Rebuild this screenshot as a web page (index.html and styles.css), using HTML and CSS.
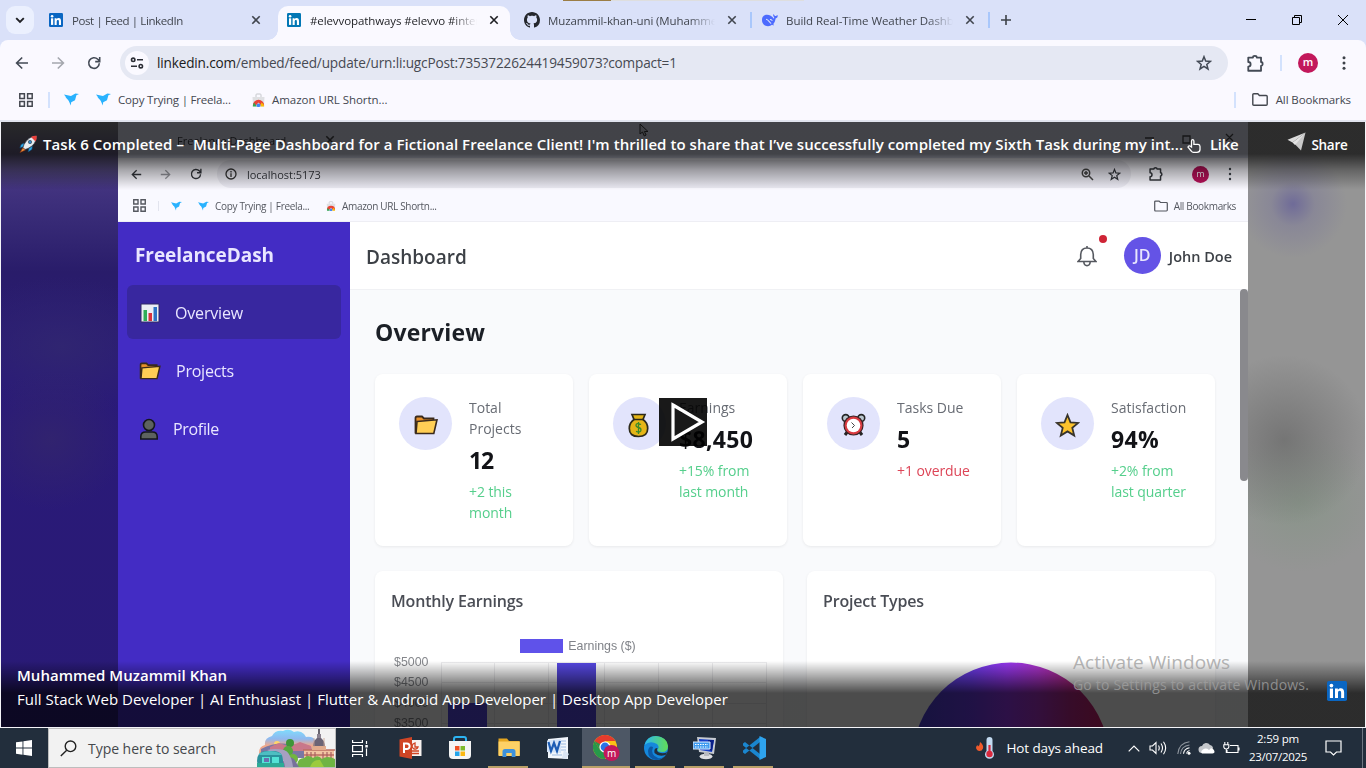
FILE: index.html
```html
<!DOCTYPE html>
<html lang="en">
<head>
<meta charset="utf-8">
<title>#elevvopathways #elevvo</title>
<link rel="stylesheet" href="styles.css">
</head>
<body>
<svg class="defs" width="0" height="0">
  <defs>
    <symbol id="li" viewBox="0 0 14 14"><rect width="14" height="14" rx="1.2" fill="currentColor"/><g fill="#fff"><circle cx="3.1" cy="3.2" r="1.3"/><rect x="2" y="5.3" width="2.2" height="6.6"/><path d="M5.6 5.3h2v.9c.4-.7 1.1-1.1 2-1.1 1.8 0 2.4 1.2 2.4 2.9v3.9H9.9V8.5c0-.9-.2-1.6-1-1.6s-1.2.6-1.2 1.6v3.4H5.6z"/></g></symbol>
    <symbol id="x" viewBox="0 0 10 10"><path d="M1.3 1.3l7.4 7.4M8.7 1.3L1.3 8.7" stroke="currentColor" stroke-width="1.6" fill="none"/></symbol>
    <symbol id="back" viewBox="0 0 14 14"><path d="M13 7H2M7.2 1.5L1.6 7l5.6 5.5" stroke="currentColor" stroke-width="1.6" fill="none"/></symbol>
    <symbol id="reload" viewBox="0 0 14 14"><path d="M12.3 7.2A5.3 5.3 0 1 1 10.8 3.3L12.6 5M12.7 1v4.6H8.2" stroke="currentColor" stroke-width="1.6" fill="none"/></symbol>
    <symbol id="grid" viewBox="0 0 14 14"><path d="M.8.8h4.6v4.6H.8zM8.6.8h4.6v4.6H8.6zM.8 8.6h4.6v4.6H.8zM8.6 8.6h4.6v4.6H8.6z" stroke="currentColor" stroke-width="1.5" fill="none"/></symbol>
    <symbol id="bird" viewBox="0 0 15 13"><path d="M0 1.4l7 1.6L11.4.6 15 .9 12.4 2.3 11 7.2 7.2 9.2 6.8 12.6 4.8 8z" fill="#29b2fe"/><path d="M1.5 4l5 .8-3 1.4z" fill="#29b2fe"/></symbol>
    <symbol id="store" viewBox="0 0 13 14"><path d="M4 4V1.8Q4 1 4.800 1h3.400Q9 1 9 1.800V4" stroke="#c6c8cc" fill="none"/><path d="M.5 4h12l-.6 9.400H1.100z" fill="#dfe0e3"/><path d="M.800 12.500a5.700 5.700 0 0 1 11.400 0H9.200L6.500 9.500 3.800 12.500z" fill="#ea4335"/><path d="M.800 13.500a5.500 5.500 0 0 1 1.300-3.800l2.800 3.800z" fill="#34a853"/><path d="M8.200 13.500l1.300-4.100q2.700 1.500 2.700 4.100z" fill="#fbbc04"/><circle cx="6.500" cy="12.300" r="1.900" fill="#4285f4"/></symbol>
    <symbol id="star" viewBox="0 0 16 16"><path d="M8 1.700l1.700 4.400 4.700.3-3.600 3 1.200 4.600L8 11.400 4 14l1.200-4.600-3.600-3 4.700-.3z" stroke="currentColor" stroke-width="1.500" fill="none"/></symbol>
    <symbol id="puzzle" viewBox="0 0 16 16"><path d="M1.200 2.400H5.600a1.800 1.500 0 0 1 3.600 0H13.200V6.600a1.500 1.800 0 0 1 0 3.600V14.800H1.200V11a2 2 0 0 0 0-4.400z" stroke="currentColor" stroke-width="1.700" fill="none" stroke-linejoin="round"/></symbol>
    <symbol id="folderline" viewBox="0 0 16 13"><path d="M.8 1.800Q.8.800 1.800.8h4l1.600 1.700h6.800q1 0 1 1v7.700q0 1-1 1H1.800q-1 0-1-1z" stroke="currentColor" stroke-width="1.400" fill="none"/></symbol>
    <symbol id="folder" viewBox="0 0 24 20"><path d="M1.500 18.500V3Q1.500 1.500 3 1.500h5l2 2h9.500V6" fill="#e8902a" stroke="#3a2a1c" stroke-width="1.800"/><path d="M3 6.500L23 4.800 19.800 18.500H2z" fill="#ffce55" stroke="#3a2a1c" stroke-width="1.600"/></symbol>
  </defs>
</svg>

<div class="screen">
  <div class="tabstrip">
    <i class="edge edge-a"></i><i class="edge edge-b"></i>
    <div class="tabsearch"><svg width="10" height="7" viewBox="0 0 10 7"><path d="M1.200 1.200L5 5l3.800-3.800" stroke="#1f2024" stroke-width="1.900" fill="none"/></svg></div>
    <div class="tab"><svg class="fav lia"><use href="#li"/></svg><span class="title t1">Post | Feed | LinkedIn</span><svg class="x"><use href="#x"/></svg></div>
    <div class="tab active"><svg class="fav lib"><use href="#li"/></svg><span class="title t2">#elevvopathways #elevvo #internship</span><svg class="x"><use href="#x"/></svg></div>
    <div class="tab"><svg class="fav gh" viewBox="0 0 16 16"><path fill="#24272d" d="M8 0C3.580 0 0 3.580 0 8c0 3.540 2.290 6.530 5.470 7.590.4.070.550-.170.550-.380 0-.190-.010-.820-.010-1.490-2.010.370-2.530-.490-2.690-.940-.090-.230-.480-.940-.820-1.130-.280-.150-.680-.520-.010-.530.630-.010 1.080.580 1.230.820.720 1.210 1.870.870 2.330.660.070-.520.280-.870.510-1.070-1.780-.200-3.640-.890-3.640-3.950 0-.870.310-1.590.820-2.150-.080-.200-.360-1.020.080-2.120 0 0 .670-.210 2.200.820.640-.180 1.320-.270 2-.270s1.360.090 2 .270c1.530-1.040 2.200-.820 2.200-.820.440 1.100.160 1.920.080 2.120.510.560.820 1.270.820 2.150 0 3.070-1.870 3.750-3.650 3.950.290.250.540.730.540 1.480 0 1.070-.010 1.930-.010 2.200 0 .210.150.460.550.380A8.010 8.010 0 0 0 16 8c0-4.420-3.580-8-8-8z"/></svg><span class="title t3">Muzammil-khan-uni (Muhammed</span><svg class="x"><use href="#x"/></svg></div>
    <div class="tab sep"><svg class="fav gh" viewBox="0 0 16 16"><path fill="#4d6bfe" d="M15.700 3.200c-.8-.2-1 .5-1.800.7-1 .2-1.700-.7-2.200-2-.8.900-.6 2 .1 2.900.6.700.4 1.200.100 1.900C10 4 7.600 2.800 5 2.700 2 2.600 0 4.800 0 8c0 3.700 2.600 6.200 6 6.200 1.800 0 3-.5 4-1.400l1.600.6c.4-.300 0-.9-.3-1.500 1.400-1.500 2-3.300 2.300-5.500C15 6 15.900 5 15.700 3.200z"/><path d="M4 7.200c2.500.2 3.500 3.600 5.200 4.300M8 7.600q1.600-.4 2.300 1.300" stroke="#dae1f9" stroke-width="1.100" fill="none"/></svg><span class="title t4">Build Real-Time Weather Dashboard</span><svg class="x"><use href="#x"/></svg></div>
    <svg class="plus" width="12" height="12" viewBox="0 0 12 12"><path d="M6 1v10M1 6h10" stroke="#3c4148" stroke-width="1.600"/></svg>
    <div class="wincontrols">
      <svg width="12" height="12" viewBox="0 0 12 12"><path d="M1 5.500h10" stroke="#000"/></svg>
      <svg width="12" height="12" viewBox="0 0 12 12" fill="none" stroke="#000"><path d="M1.500 3.500h7v7h-7zM3.500 3V1.500h7v7H9"/></svg>
      <svg width="12" height="12" viewBox="0 0 12 12"><path d="M1 1l10 10M11 1L1 11" stroke="#000"/></svg>
    </div>
  </div>

  <div class="toolbar">
    <div class="nav"><svg><use href="#back"/></svg><svg class="fwd"><use href="#back"/></svg><svg><use href="#reload"/></svg></div>
    <div class="omnibox">
      <div class="tune"><svg width="14" height="12" viewBox="0 0 14 12" fill="none" stroke="#2c2f36" stroke-width="1.600"><circle cx="3.200" cy="2.800" r="1.700"/><path d="M7 2.800h6M1 9.200h6"/><circle cx="10.800" cy="9.200" r="1.700"/></svg></div>
      <span class="url"><b>linkedin.com</b>/embed/feed/update/urn:li:ugcPost:7353722624419459073?compact=1</span>
      <svg class="star"><use href="#star"/></svg>
    </div>
    <svg class="puz"><use href="#puzzle"/></svg>
    <i class="vsep"></i>
    <div class="profile">m</div>
    <svg class="kebab" width="4" height="14" viewBox="0 0 4 14" fill="#3c4148"><circle cx="2" cy="1.700" r="1.500"/><circle cx="2" cy="7" r="1.500"/><circle cx="2" cy="12.300" r="1.500"/></svg>
  </div>

  <div class="bookmarks">
    <svg class="grid"><use href="#grid"/></svg><i class="vsep"></i>
    <svg class="bird"><use href="#bird"/></svg>
    <svg class="bird second"><use href="#bird"/></svg><span class="bm bm1">Copy Trying | Freela...</span>
    <svg class="store"><use href="#store"/></svg><span class="bm bm2">Amazon URL Shortn...</span>
    <div class="allbm"><i class="vsep"></i><svg class="fold"><use href="#folderline"/></svg><span class="bm bm3">All Bookmarks</span></div>
  </div>

  <div class="stage">
    <div class="side left"></div>
    <div class="frame">
      <div class="f-tabs"><i></i><b>Freelance Dashboard</b><svg class="x"><use href="#x"/></svg>
        <svg class="cursor" width="10" height="14" viewBox="0 0 10 14"><path d="M1 1v10l2.500-2 1.800 4 1.800-1-1.700-3.500H9z" fill="#cfd2de" stroke="#333"/></svg>
        <svg class="f-win" width="92" height="12" viewBox="0 0 92 12" fill="none" stroke="#222" stroke-width="1.300"><path d="M2 6h9M40 4h7v7h-7zM83 2l7 7M90 2l-7 7"/></svg></div>
      <div class="f-bar">
        <svg class="f-back"><use href="#back"/></svg><svg class="f-fwd"><use href="#back"/></svg><svg class="f-rel"><use href="#reload"/></svg>
        <div class="f-omni"><svg width="12" height="12" viewBox="0 0 12 12" fill="none" stroke="#333" stroke-width="1.300"><circle cx="6" cy="6" r="5"/><path d="M6 5.300V9M6 3v1.400"/></svg><span>localhost:5173</span>
          <svg class="f-zoom" width="13" height="13" viewBox="0 0 13 13" fill="none" stroke="#444" stroke-width="1.500"><circle cx="5" cy="5" r="3.700"/><path d="M8 8l4 4M3 5h4M5 3v4"/></svg><svg class="f-star"><use href="#star"/></svg></div>
        <svg class="f-puz"><use href="#puzzle"/></svg><div class="f-prof">m</div><svg class="f-keb" width="4" height="14" viewBox="0 0 4 14" fill="#3c4148"><circle cx="2" cy="2" r="1.200"/><circle cx="2" cy="7" r="1.200"/><circle cx="2" cy="12" r="1.200"/></svg>
      </div>
      <div class="f-marks">
        <svg class="fgrid"><use href="#grid"/></svg><i></i><svg class="fbird"><use href="#bird"/></svg><svg class="fbird b2"><use href="#bird"/></svg><span class="fm1">Copy Trying | Freela...</span><svg class="fstore"><use href="#store"/></svg><span class="fm2">Amazon URL Shortn...</span>
        <div class="f-all"><svg><use href="#folderline"/></svg><span>All Bookmarks</span></div>
      </div>
      <div class="app">
        <div class="sidebar">
          <div class="brand">FreelanceDash</div>
          <div class="item on"><svg width="22" height="22" viewBox="0 0 22 22"><path d="M2 2h18v18H2z" fill="#eceff4" stroke="#312a66"/><path d="M4.500 8h3.500v11H4.500z" fill="#2fae58"/><path d="M9.500 11h3.500v8H9.500z" fill="#d8323c"/><path d="M14.500 5h3.500v14h-3.500z" fill="#2d74c4"/></svg><span class="n1">Overview</span></div>
          <div class="item"><svg width="22" height="18"><use href="#folder"/></svg><span class="n2">Projects</span></div>
          <div class="item"><svg width="20" height="22" viewBox="0 0 20 22" fill="#5d625f" stroke="#15171c" stroke-width="1.600"><circle cx="10" cy="7" r="5.500"/><path d="M1.800 21v-2.500Q2 14 6.500 14h7q4.500 0 4.700 4.500V21z"/></svg><span class="n3">Profile</span></div>
        </div>
        <div class="main">
          <div class="header"><span class="h-title">Dashboard</span>
            <div class="bell"><svg width="20" height="22" viewBox="0 0 20 22" fill="none" stroke="#55585f" stroke-width="1.600"><path d="M10 1v2M1 16.500h18L16.300 13.500V9.500Q16 3 10 3T3.700 9.500v4zM6.800 17q.4 3.600 3.200 3.600T13.200 17"/></svg><i></i></div>
            <div class="jd">JD</div><span class="john">John Doe</span></div>
          <div class="content">
            <h2>Overview</h2>
            <div class="cards">
              <div class="card"><div class="ic"><svg width="24" height="20"><use href="#folder"/></svg></div><div class="tx"><span>Total<br>Projects</span><strong class="twelve">12</strong><em>+2 this<br>month</em></div></div>
              <div class="card earn"><div class="ic"><svg width="21" height="25" viewBox="0 0 21 25"><path d="M4 1.500h13l-2 5q4.700 3.300 4.700 9 0 8-9.200 8t-9.200-8q0-5.700 4.700-9z" fill="#e5b517" stroke="#2d2a1c" stroke-width="1.700"/><path d="M5 6.500h11" stroke="#2d2a1c" stroke-width="1.500"/><path d="M13 11.500q-5-2-5 .8 0 1.700 2.500 2.200T13 17q0 3-5 1.300M10.500 9v12" stroke="#3b8b2a" stroke-width="1.300" fill="none"/></svg></div><div class="tx"><span>Earnings</span><strong>$8,450</strong><em>+15% from<br>last month</em></div></div>
              <div class="card"><div class="ic"><svg width="25" height="24" viewBox="0 0 25 24"><path d="M4 22l3-4M21 22l-3-4" stroke="#252525" stroke-width="3"/><circle cx="4.700" cy="5" r="3.400" fill="#b9c6ce" stroke="#252525" stroke-width="1.600"/><circle cx="20.300" cy="5" r="3.400" fill="#b9c6ce" stroke="#252525" stroke-width="1.600"/><circle cx="12.500" cy="12.500" r="9.500" fill="#d93b41" stroke="#3c2326" stroke-width="1.200"/><circle cx="12.500" cy="12.500" r="6.800" fill="#fff"/><path d="M10.500 9.500l3 3-2.500 2.500" stroke="#444" fill="none"/></svg></div><div class="tx"><span>Tasks Due</span><strong>5</strong><em class="red">+1 overdue</em></div></div>
              <div class="card"><div class="ic"><svg width="25" height="25" viewBox="0 0 25 25"><path d="M12.500 2l3 7.300 7.700.6-5.900 5 1.900 7.600-6.700-4.100-6.700 4.100 1.900-7.600-5.900-5 7.700-.6z" fill="#fcc22c" stroke="#37332b" stroke-width="1.800"/></svg></div><div class="tx"><span>Satisfaction</span><strong>94%</strong><em>+2% from<br>last quarter</em></div></div>
            </div>
            <div class="charts">
              <div class="panel"><h3>Monthly Earnings</h3>
                <div class="legend"><i></i>Earnings ($)</div>
                <div class="plot"><div class="yaxis"><span>$5000</span><span>$4500</span><span>$4000</span><span>$3500</span></div>
                  <svg width="326" height="70" viewBox="0 0 326 70"><path d="M.5 0v70M53.500 0v70M107.500 0v70M163.500 0v70M217.500 0v70M271.500 0v70M325.500 0v70M0 .5h330M0 20.500h330M0 41.500h330M0 61.500h330" stroke="#ececee" fill="none"/><path d="M7 41h39v30H7zM116 1h39v70h-39z" fill="#5547e0"/></svg></div>
              </div>
              <div class="panel"><h3 class="pt">Project Types</h3>
                <svg class="pie" width="200" height="80" viewBox="0 0 200 80"><defs><linearGradient id="pg"><stop offset="0" stop-color="#4640d0"/><stop offset=".3" stop-color="#6a3ae6"/><stop offset=".48" stop-color="#9436ea"/><stop offset=".64" stop-color="#a932c6"/><stop offset=".8" stop-color="#b5288a"/><stop offset="1" stop-color="#cc1f63"/></linearGradient></defs><circle cx="100" cy="99" r="98.500" fill="url(#pg)"/></svg>
              </div>
            </div>
            <div class="scroll"></div>
          </div>
        </div>
      </div>
    </div>
    <div class="side right"></div>
    <div class="shade top"></div>
    <div class="shade bottom"></div>
    <div class="caption">
      <svg class="rocket" width="19" height="18" viewBox="0 0 19 18"><path d="M5 8L2 9.500.8 13 5 11.500zM10 13l-1 4 4-2.500.500-4z" fill="#2aa8e8" stroke="#143a60" stroke-width=".6"/><path d="M4 12.500L1 17.500 6.500 15z" fill="#f7923a" stroke="#7a2b10" stroke-width=".6"/><path d="M17.500 1Q9.500 1 5 9.500l-1 3L6 14.500l3-1Q17.500 9.500 17.500 1z" fill="#e8edf2" stroke="#333a44" stroke-width=".7"/><path d="M17.700.8q-3.500-.200-5.700 1.200l4.500 4.600Q18 4 17.700.8z" fill="#e8413c"/><circle cx="11" cy="7" r="1.700" fill="#2f87c8" stroke="#333a44" stroke-width=".6"/></svg>
      <span class="c1">Task 6 Completed –</span><span class="c2">Multi-Page Dashboard for a Fictional Freelance Client! I'm thrilled to share that I’ve successfully completed my Sixth Task during my int...</span>
      <svg class="thumb" width="14" height="14" viewBox="0 0 14 14" fill="none" stroke="#fff" stroke-width="1.300"><path d="M4.500 7V2Q4.600.7 5.700.7T6.900 2v3.400h4.200q1.900.2 1.900 2v3.200q-.2 2.700-3 2.700H6.500Q5 13.300 4.200 12L1 8.200Q1.500 6.500 3 7l1.500 1z"/></svg>
      <span class="c3">Like</span>
      <svg class="plane" width="19" height="19" viewBox="0 0 19 19"><path d="M18.500.5L.5 7.800l5 2.800z" fill="#dcdcdc"/><path d="M18.500.5L7 11.200 14 18.500z" fill="#c9c9c9"/><path d="M18.500.5L5.500 10.600 8 13z" fill="#e4e4e4"/></svg>
      <span class="c4">Share</span>
    </div>
    <div class="play"><svg width="48" height="48" viewBox="0 0 48 48"><path d="M14 7L43 24 14 41z" fill="none" stroke="#fff" stroke-width="3.200"/></svg></div>
    <div class="author"><b>Muhammed Muzammil Khan</b><span class="role">Full Stack Web Developer | AI Enthusiast | Flutter &amp; Android App Developer | Desktop App Developer</span></div>
    <svg class="lilogo"><use href="#li"/></svg>
    <div class="watermark"><div class="w1">Activate Windows</div><div class="w2">Go to Settings to activate Windows.</div></div>
  </div>

  <div class="taskbar">
    <div class="start"><svg width="16" height="16" viewBox="0 0 16 16" fill="#fff"><path d="M0 2.300L6.500 1.400v6.200H0zM7.400 1.200L16 0v7.600H7.400zM0 8.500h6.500v6.200L0 13.800zM7.400 8.500H16V16l-8.600-1.200z"/></svg></div>
    <div class="search"><svg class="mag" width="17" height="17" viewBox="0 0 17 17" fill="none" stroke="#222" stroke-width="1.400"><circle cx="10.500" cy="6.300" r="5.300"/><path d="M6.700 10.200L.8 16"/></svg><span>Type here to search</span>
      <svg class="city" width="78" height="38" viewBox="0 0 78 38">
        <defs><linearGradient id="sky" x2="0" y2="1"><stop offset="0" stop-color="#7fdcfd"/><stop offset=".35" stop-color="#8fb8ee"/><stop offset=".6" stop-color="#f0a98c"/></linearGradient></defs>
        <path d="M2 24q0-7 6-8Q7 9 15 7 18 1 26 2q6-3 11 1 6-2 10 2l2 3q8-1 10 5l-3 14H4z" fill="url(#sky)"/>
        <circle cx="20" cy="15" r="3" fill="#ffd66b"/>
        <path d="M4 20q14-7 28-5l22 2 2 12H4z" fill="#7a78a4"/><path d="M13 18l9-4 9 3v4H13zM34 17l9-4 11 4v5H34z" fill="#c9788a"/>
        <circle cx="33" cy="14" r="4" fill="#3f9638"/><circle cx="31" cy="22" r="5" fill="#57a83e"/><circle cx="36" cy="30" r="5" fill="#72b53f"/>
        <path d="M47 21h30v13H47z" fill="#f2c3a2"/><path d="M46 21h32M47 26h30" stroke="#bd6f62" stroke-width="1.500"/><path d="M50 23v10M54 23v10M58 23v10M66 23v10M70 23v10M74 23v10" stroke="#a96162" stroke-width="1.200"/>
        <path d="M56 19q0-9 6-11 6 2 6 11z" fill="#6b6475"/><path d="M62 0v9" stroke="#443f4d" stroke-width="1.600"/><path d="M60 5h4v4h-4z" fill="#8b8290"/><path d="M55 17h14v4H55z" fill="#e2ac8d"/><path d="M57 9v9M67 9v9" stroke="#c9a191" stroke-width=".8"/>
        <path d="M40 38q0-9 7-9 4-4 9 0 5-4 9 1 5-4 13 0v8z" fill="#6fb443"/><path d="M53 38q3-8 10-7l4 7z" fill="#9bcb3d"/>
        <path d="M22 38q8-14 15-8l5 8z" fill="#77719b"/><path d="M10 21q8-2 17 0 7 2 9 17H28q-1-9-7-12z" fill="#a6a0c1"/>
        <path d="M0 32q0-9 8-10h10q8 1 8 9v7H1z" fill="#2a919c"/><path d="M3 24q9-4 20 0l2 2H2z" fill="#4dbec2"/><path d="M5 28h8v6H5zM15 28h7v6h-7z" fill="#53e2d6"/><path d="M7 29h5v4H7z" fill="#6a6fb0"/><path d="M0 34h27v4H0z" fill="#2cab96"/>
      </svg></div>
    <div class="tb view"><svg width="18" height="17" viewBox="0 0 18 17" fill="none" stroke="#fff" stroke-width="1.200"><path d="M1.600 5.500h9.800v6.200H1.600zM1.600 0v2.500h9.800V0M1.600 17v-2.500h9.800V17M15.500 1v3M15.500 8.500V16"/><path d="M14.300 5h2.500v2.500h-2.500z" fill="#fff" stroke="none"/></svg></div>
    <div class="tb"><svg width="23" height="22" viewBox="0 0 23 22"><path d="M11 3h11.500v16H11z" fill="#f7f1ef"/><path d="M14 7a3 3 0 1 0 5 3h-3V6z" fill="none" stroke="#d14424" stroke-width="1.300"/><path d="M13 14h7M13 16.500h7" stroke="#d14424" stroke-width="1.300"/><path d="M.5 2.500L13 0v22L.5 19.500z" fill="#d04525"/><path d="M5 16V6.500h2.800a2.600 2.600 0 0 1 0 5.600H5" fill="none" stroke="#fff" stroke-width="2"/></svg></div>
    <div class="tb"><svg width="22" height="24" viewBox="0 0 22 24"><path d="M5 7V3Q5 1 7 1h8q2 0 2 2v4" fill="none" stroke="#2cb4f2" stroke-width="2"/><path d="M0 5h22v14q0 4-4 4H4q-4 0-4-4z" fill="#f5f5f5"/><path d="M6 10h4.500v4.500H6z" fill="#ef5226"/><path d="M11.500 10H16v4.500h-4.500z" fill="#7eba2a"/><path d="M6 15.500h4.500V20H6z" fill="#24a4ea"/><path d="M11.500 15.500H16V20h-4.500z" fill="#fbb813"/></svg></div>
    <div class="tb run"><svg width="22" height="20" viewBox="0 0 22 20"><path d="M.5.500H9l2 2.500h10.500V17H.5z" fill="#e5a620"/><path d="M.5 3.500h21.300V18H.5z" fill="#fdd166"/><path d="M4.500 19v-5.500q0-2.500 2.500-2.500h8q2.500 0 2.500 2.500V19h-3.800v-4H8.300v4z" fill="#3d91dc"/></svg></div>
    <div class="tb"><svg width="23" height="22" viewBox="0 0 23 22"><path d="M2 2L22 0v22L2 21z" fill="#f3f7fc"/><path d="M14 4h6M14 7h6M14 10h6M14 13h6M6 18h10" stroke="#9dbbe2"/><path d="M1 3.500L15 2v14L1 15z" fill="#d4e3f6"/><path d="M2.500 5l2.500 9L8 6l3 8 3-10" fill="none" stroke="#1c5cb4" stroke-width="2.200"/><path d="M18 13l5 4-3 5-4-1z" fill="#dbe6f4"/></svg></div>
    <div class="tb run hot"><svg width="27" height="26" viewBox="0 0 27 26"><circle cx="12" cy="12" r="12" fill="#fbc116"/><path d="M1.600 6A12 12 0 0 1 22.400 6H12z" fill="#e33b2e"/><path d="M1.600 6A12 12 0 0 0 12 24L17 15H7z" fill="#26994a"/><path d="M1.600 6L7 15l5-9z" fill="#e33b2e"/><path d="M1.600 6L7.200 15.500 10 11z" fill="#26994a"/><circle cx="12" cy="12" r="5.600" fill="#fff"/><circle cx="12" cy="12" r="4.400" fill="#2a72e8"/><circle cx="18.500" cy="18" r="8" fill="#c2185b"/></svg><b>m</b></div>
    <div class="tb run"><svg width="24" height="24" viewBox="0 0 24 24"><defs><linearGradient id="eg"><stop offset="0" stop-color="#2cb8f0"/><stop offset="1" stop-color="#62dc55"/></linearGradient></defs><circle cx="12" cy="12" r="12" fill="#1588dc"/><path d="M.5 9Q3 0 12 0q11 1 12 10 0 6-6 6-4.500 0-4.500-2.500Q16 11 13 8 6 4 .5 9z" fill="url(#eg)"/><path d="M9 11q-3 8 5 11 3 1 7-2-4 4-9 4Q4 23 4 15 5 9 9 11z" fill="#0c59a4"/><path d="M13.500 12q-1.500 3 1.500 4.500 4 1.800 8.500-.5L21.500 19q-7 2-11-2-1-5 3-5z" fill="#222e3b"/></svg></div>
    <div class="tb run"><svg width="24" height="24" viewBox="0 0 24 24"><path d="M4 1l19 1-2 16-15-2z" fill="#c7cbd2"/><path d="M6 3l15 1-2 12-12-2z" fill="#1640c8"/><path d="M15 4l6 0-2 11-3-1z" fill="#0a1f86"/><path d="M0 6h17v7H0z" fill="#3d9af0" stroke="#dfeeff"/><path d="M2 8.500h13M2 11h13" stroke="#fff" stroke-dasharray="1.500 1"/><ellipse cx="13" cy="20.500" rx="6.500" ry="2.800" fill="#dedfe2"/><path d="M11 16h5v4h-5z" fill="#b8bac0"/></svg></div>
    <div class="tb run"><svg width="24" height="24" viewBox="0 0 24 24"><path d="M1 7.500L3 6l15 12v5L1 9.500zM1 16.500L3 18 18 6V1L1 14.500z" fill="#1a86cf"/><path d="M17.500 0L24 3v18l-6.500 3z" fill="#2ea3ee"/></svg></div>
    <div class="tray">
      <svg class="hotdays" width="19" height="22" viewBox="0 0 19 22"><path d="M4 5q4 3 3 6.500Q6 14 3.500 14T0 11q0-2 1.500-3L2 9.500Q4 8 4 5z" fill="#f25a2b"/><path d="M10.500 3a3 3 0 0 1 6 0v11a4.500 4.500 0 1 1-6 0z" fill="#c3daf1"/><circle cx="13.500" cy="17" r="3.200" fill="#d9283c"/><path d="M13.500 8v9" stroke="#d9283c" stroke-width="2.200"/></svg>
      <span class="wx">Hot days ahead</span>
      <svg class="ti chev" width="12" height="7" viewBox="0 0 12 7"><path d="M.7 6.300L6 1l5.300 5.300" stroke="#fff" stroke-width="1.200" fill="none"/></svg>
      <svg class="ti spk" width="18" height="14" viewBox="0 0 18 14" fill="none" stroke="#fff" stroke-width="1.100"><path d="M1 5h2.500L7 1.500v11L3.500 9H1zM9.500 4.500q1.500 2.500 0 5M12 2.500q3 4.500 0 9M14.500.800q4.300 6.200 0 12.400"/></svg>
      <svg class="ti wifi" width="14" height="14" viewBox="0 0 14 14" fill="none" stroke="#fff" stroke-width="1.100"><path d="M9.500 12.500q.5-2.500 3-3M6.500 12.800q.5-5 6-6"/><path d="M3.500 13q.7-8 9-9M.8 13Q1.800 2 12.500.8" stroke="#8f969e"/><circle cx="12" cy="12.200" r="1.500" fill="#fff" stroke="none"/></svg>
      <svg class="ti cloud" width="17" height="12" viewBox="0 0 17 12"><path d="M4 11a3.500 3.500 0 0 1 0-7 4.500 4.500 0 0 1 8-1q3 .5 3 3.500z" fill="#c4c7cb"/><path d="M4 11.500q-2-2 1-4 3-2 6 .5 2-3 4.500-.5Q18 11 14.500 11.500z" fill="#fff"/></svg>
      <svg class="ti bat" width="17" height="12" viewBox="0 0 17 12" fill="none" stroke="#fff" stroke-width="1.100"><path d="M7 3.500h8v7H4V8M16 5.500v3M1.800 0v2.500M4.800 0v2.500M.8 2.800h5v2.300Q5.500 7 3.300 7T.8 5.100zM3.300 7v4"/></svg>
      <div class="clock"><span class="k1">2:59 pm</span><span class="k2">23/07/2025</span></div>
      <svg class="note" width="17" height="16" viewBox="0 0 17 16" fill="none" stroke="#fff" stroke-width="1.200"><path d="M1 1h15v11h-4.500L8.500 15 5.500 12H1z"/></svg>
      <i class="peek"></i>
    </div>
  </div>
</div>
</body>
</html>
```
FILE: styles.css
```css
* { box-sizing: border-box; }
body { margin: 0; font-family: "Open Sans", "Noto Sans", sans-serif; font-size: 12px; }
svg { display: block; flex: none; }
.defs { position: absolute; }
.screen { width: 1366px; height: 768px; overflow: hidden; display: flex; flex-direction: column; background: #dae1f9; }

/* tab strip */
.tabstrip { position: relative; height: 40px; background: #dae1f9; display: flex; flex: none; align-items: center; padding-left: 6px; }
.edge { position: absolute; top: 0; height: 1px; }
.edge-a { left: 563px; width: 48px; background: #9b7d45; }
.edge-b { left: 611px; width: 193px; background: #dedede; }
.tabsearch { width: 28px; height: 28px; border-radius: 9px; background: #ebf0fe; display: flex; align-items: center; justify-content: center; margin-right: 6px; }
.tab { position: relative; width: 238px; height: 34px; padding: 0 17px 6px 9px; margin-top: 6px; display: flex; align-items: center; color: #40454e; }
.tab.active { background: #faf9ff; border-radius: 10px 10px 0 0; width: 232px; margin-right: 6px; padding-right: 11px; color: #1d1e22; }
.tab.active::before, .tab.active::after { content: ""; position: absolute; bottom: 0; width: 10px; height: 10px; }
.tab.active::before { left: -10px; background: radial-gradient(circle at 0 0, transparent 9.500px, #faf9ff 10px); }
.tab.active::after { right: -10px; background: radial-gradient(circle at 100% 0, transparent 9.500px, #faf9ff 10px); }
.tab.sep::before, .tab.sep::after { content: ""; position: absolute; top: 6px; width: 2px; height: 16px; background: #a9c7fb; }
.tab.sep::before { left: -4px; }
.tab.sep::after { right: 2px; }
.fav { width: 14px; height: 14px; margin-right: 9px; }
.fav.gh { width: 16px; height: 16px; margin: 0 8px 0 -1px; }
.lia { color: #0a66c2; }
.lib { color: #0277b5; }
.title { flex: 1; overflow: hidden; white-space: nowrap; font-size: 11.500px; margin-right: 12px; -webkit-mask-image: linear-gradient(90deg, #000 calc(100% - 26px), transparent); }
.active .title { margin-right: 12px; }
.t1 { letter-spacing: -.4px; } .t2 { letter-spacing: -.1px; } .t3 { letter-spacing: -.12px; } .t4 { letter-spacing: -.05px; }
.x { width: 10px; height: 10px; }
.plus { margin-left: 8px; }
.wincontrols { margin-left: auto; display: flex; gap: 34px; padding-right: 17px; }

/* toolbar */
.toolbar { height: 46px; flex: none; display: flex; align-items: center; color: #434a55; border-radius: 8px 8px 0 0; background: #faf9ff; }
.nav { display: flex; gap: 22px; padding-left: 15px; width: 120px; }
.nav svg { width: 14px; height: 14px; }
.fwd { transform: scaleX(-1); color: #a4a7ae; }
.omnibox { width: 1108px; height: 34px; border-radius: 17px; background: #e5e8f3; display: flex; align-items: center; padding: 0 16px 0 5px; }
.tune { width: 24px; height: 24px; border-radius: 50%; background: #faf9ff; display: flex; align-items: center; justify-content: center; margin-right: 8px; }
.url { font-size: 13.600px; letter-spacing: -.16px; color: #474a52; padding-bottom: 2px; }
.url b { font-weight: 400; color: #1b1c20; }
.star { width: 16px; height: 16px; margin-left: auto; }
.puz { width: 17px; height: 17px; margin-left: 19px; }
.vsep { width: 2px; height: 16px; background: #d3e2fd; flex: none; }
.toolbar .vsep { margin-left: 16px; }
.profile { width: 20px; height: 20px; border-radius: 50%; background: #c2185b; color: #fff; text-align: center; font-size: 11px; line-height: 18px; font-weight: 600; margin-left: 16px; }
.kebab { margin-left: 24px; }

/* bookmarks */
.bookmarks { height: 36px; padding-bottom: 7px; flex: none; display: flex; align-items: center; padding-left: 19px; color: #43474f; background: #faf9ff; border-bottom: 2px solid #e1e4ee; }
.grid { width: 14px; height: 14px; margin-right: 15px; }
.bird { width: 15px; height: 13px; margin-left: 14px; }
.bird.second { margin: 0 7px 0 17px; }
.bm { font-size: 11.500px; white-space: nowrap; }
.bm1 { letter-spacing: -.19px; width: 134px; } .bm2 { letter-spacing: -.04px; } .bm3 { letter-spacing: -.1px; }
.store { width: 13px; height: 14px; margin-right: 7px; }
.allbm { margin-left: auto; display: flex; align-items: center; padding-right: 15px; }
.fold { width: 16px; height: 13px; margin: 0 8px 0 16px; }

/* embedded video */
.stage { position: relative; height: 606px; flex: none; display: flex; border: 1px solid #f4f4f8; border-top: 0; overflow: hidden; }
.side { width: 117px; flex: none; }
.left { background: radial-gradient(ellipse 75px 70px at 50px 318px, #31236f, transparent), radial-gradient(ellipse 110px 70px at 60px 225px, #302571, transparent), linear-gradient(#87888d 0, #5a5180 40px, #42337f 66px, #372a76 100px, #291c6a 150px, #2a1a78 250px, #291a76 100%); }
.right { background: radial-gradient(circle at 45px 82px, #6f6b98, rgba(125,122,152,.5) 22px, transparent 54px), radial-gradient(ellipse 85px 85px at 36px 318px, rgba(100,100,100,.65), transparent), radial-gradient(ellipse 80px 70px at 52px 380px, rgba(125,147,126,.5), transparent), #959595; }
.frame { width: 1130px; height: 605px; flex: none; overflow: hidden; background: #f9f9ff; filter: blur(.6px); display: flex; flex-direction: column; clip-path: inset(0); }
.f-tabs { height: 36px; flex: none; background: #dde1f2; display: flex; align-items: center; color: #222; position: relative; padding-left: 15px; }
.f-tabs i { width: 14px; height: 14px; }
.f-tabs b { font-weight: 400; font-size: 11px; color: #3c3e46; width: 148px; margin-left: 30px; }
.f-tabs .x { opacity: .8; }
.cursor { position: absolute; left: 521px; top: 1px; }
.f-win { position: absolute; right: 13px; top: 10px; opacity: .8; }
.f-bar { height: 32px; flex: none; display: flex; align-items: center; background: #f9f8ff; padding-left: 13px; color: #34373d; }
.f-back, .f-fwd, .f-rel { width: 11px; height: 11px; margin-right: 18px; }
.f-fwd { transform: scaleX(-1); opacity: .5; }
.f-rel { width: 12px; height: 12px; margin: 0 15px 0 1px; }
.f-omni { width: 914px; height: 28px; border-radius: 14px; background: #ebeaf3; display: flex; align-items: center; padding: 0 8px; font-size: 11px; gap: 10px; }
.f-omni span { width: 824px; letter-spacing: -.02px; }
.f-star { width: 13px; height: 13px; margin-left: 4px; }
.f-puz { width: 14px; height: 14px; margin-left: 18px; }
.f-prof { width: 17px; height: 17px; border-radius: 50%; background: #b9115a; color: #fff; font-size: 9px; line-height: 15px; text-align: center; margin-left: 29px; }
.f-keb { margin-left: 19px; }
.f-marks { height: 32px; flex: none; display: flex; align-items: center; padding-left: 15px; border-bottom: 1px solid #eeeef4; color: #555860; font-size: 10px; letter-spacing: -.33px; background: #f9f9ff; white-space: nowrap; }
.fgrid { width: 13px; height: 13px; }
.f-marks i { width: 1px; height: 10px; background: #e2e4ee; margin: 0 12px 0 12px; }
.fbird { width: 11px; height: 10px; }
.fbird.b2 { margin: 0 6px 0 16px; }
.fm1 { width: 111px; }
.fstore { width: 10px; height: 10px; margin-right: 6px; }
.f-all { margin-left: auto; display: flex; align-items: center; gap: 6px; padding-right: 12px; }
.f-all svg { width: 14px; height: 12px; }

.app { display: flex; flex: 1; min-height: 0; }
.sidebar { width: 232px; background: #432cc4; padding: 0 9px; color: #e9e6ff; flex: none; }
.brand { font-size: 19px; font-weight: 700; letter-spacing: -.06px; line-height: 66px; height: 63px; padding-left: 8px; }
.item { height: 54px; margin-bottom: 4px; border-radius: 6px; display: flex; align-items: center; padding: 1px 0 0 12px; gap: 14px; font-size: 16px; font-weight: 500; }
.item.on { background: #38279f; }
.n1 { letter-spacing: -.17px; } .n2 { letter-spacing: -.23px; } .n3 { letter-spacing: -.32px; }
.item:nth-child(3) { gap: 15px; }
.item:nth-child(4) { gap: 14px; }
.main { flex: 1; display: flex; flex-direction: column; min-width: 0; }
.header { height: 68px; flex: none; background: #fff; border-bottom: 1px solid #f0f1f4; display: flex; align-items: center; padding: 0 16px 0 16px; color: #3c4046; }
.h-title { font-size: 19px; font-weight: 600; margin-right: auto; padding-top: 2px; }
.bell { position: relative; margin-right: 27px; }
.bell i { position: absolute; left: 22px; top: -10px; width: 8px; height: 8px; border-radius: 50%; background: #cf2436; }
.jd { width: 37px; height: 37px; border-radius: 50%; background: #6453e6; color: #e8e6fd; font-weight: 600; font-size: 16px; line-height: 37px; text-align: center; margin-right: 8px; }
.john { font-size: 14.500px; font-weight: 600; padding-top: 2px; }
.content { position: relative; flex: 1; background: #f9fafc; padding: 0 33px 0 25px; min-height: 0; }
h2 { margin: 0; font-size: 23px; letter-spacing: .15px; font-weight: 700; color: #1b1f26; line-height: 84px; height: 84px; }
.cards { display: flex; gap: 16px; }
.card { width: 198px; height: 172px; background: #fff; border-radius: 8px; box-shadow: 0 1px 3px rgba(0,0,0,.07); padding: 23px 0 0 24px; display: flex; }
.ic { width: 53px; height: 53px; border-radius: 50%; background: #e2e4fc; display: flex; align-items: center; justify-content: center; padding-top: 3px; margin-right: 17px; flex: none; }
.earn .ic { margin-right: 13px; padding-right: 3px; }
.tx { display: flex; flex-direction: column; font-size: 14px; line-height: 21px; color: #686c74; white-space: nowrap; }
.tx strong { font-size: 23px; line-height: 42px; height: 42px; font-weight: 700; color: #121317; letter-spacing: .3px; }
.tx .twelve { letter-spacing: -1.200px; }
.tx em { font-style: normal; color: #55cf8c; letter-spacing: -.08px; }
.tx em.red { color: #dd4557; }
.charts { display: flex; gap: 24px; margin-top: 25px; }
.panel { width: 408px; height: 320px; background: #fff; border-radius: 8px; box-shadow: 0 1px 3px rgba(0,0,0,.07); padding: 19px 16px; flex: none; }
h3 { margin: 0; font-size: 16px; font-weight: 600; letter-spacing: -.18px; color: #4a4d55; line-height: 22px; }
.legend { display: flex; align-items: center; justify-content: center; gap: 5px; margin: 26px 2px 0 0; height: 16px; font: 12.400px "Liberation Sans", Arial, sans-serif; color: #808389; }
.legend i { width: 43px; height: 14px; background: #5f52ea; }
.plot { display: flex; margin-top: 8px; }
.yaxis { width: 49px; padding: 0 0 0 3px; margin-top: -10px; font: 12.400px/20.300px "Liberation Sans", Arial, sans-serif; color: #85878c; display: flex; flex-direction: column; }
.plot svg { margin-left: 2px; }
.pie { margin: 50px 0 0 88px; }
.scroll { position: absolute; right: 0; top: -1px; width: 8px; height: 192px; border-radius: 4px; background: #89898d; }

/* player overlay */
.shade { position: absolute; left: 0; right: 0; pointer-events: none; }
.shade.top { top: 0; height: 68px; background: linear-gradient(rgba(0,0,0,.7) 0, rgba(0,0,0,.7) 32px, rgba(0,0,0,.33) 48px, rgba(0,0,0,.06) 64px, transparent); }
.shade.bottom { bottom: 0; height: 66px; background: linear-gradient(transparent, rgba(0,0,0,.3) 14px, rgba(0,0,0,.7) 32px); }
.caption { position: absolute; left: 0; right: 0; top: 0; height: 44px; display: flex; align-items: center; color: #fff; font-size: 15px; font-weight: 600; padding-left: 18px; white-space: nowrap; }
.rocket { margin-right: 5px; }
.c1 { width: 150px; letter-spacing: .06px; }
.c2 { width: 994px; letter-spacing: .045px; }
.thumb { margin-top: 3px; }
.c3 { margin: 0 49px 0 9px; letter-spacing: -.3px; }
.plane { margin: -5px 5px 0 0; }
.c4 { font-size: 13.500px; letter-spacing: -.25px; padding-top: 2px; }
.play { position: absolute; left: 658px; top: 276px; width: 48px; height: 48px; background: rgba(0,0,0,.9); }
.author { position: absolute; left: 16px; bottom: 16px; display: flex; flex-direction: column; color: #fff; font-size: 15px; line-height: 24px; letter-spacing: .025px; white-space: nowrap; }
.author b { font-weight: 600; }
.lilogo { position: absolute; right: 18px; bottom: 26px; width: 20px; height: 20px; color: #0a66c2; }
.watermark { position: absolute; left: 1072px; bottom: 32px; color: rgba(160,160,160,.8); white-space: nowrap; }
.w1 { font-size: 19px; line-height: 25px; letter-spacing: .07px; }
.w2 { font-size: 14px; line-height: 20px; letter-spacing: .19px; }

/* taskbar */
.taskbar { height: 40px; flex: none; background: #222e3c; display: flex; align-items: stretch; color: #fff; }
.start { width: 48px; display: flex; align-items: center; justify-content: center; }
.search { width: 288px; background: #f2f2f2; border: 1px solid #bdbdbd; display: flex; align-items: center; color: #45484c; font-size: 14px; padding-left: 11px; overflow: hidden; }
.search span { margin-left: 11px; letter-spacing: -.04px; }
.city { margin-left: auto; }
.tb { width: 49px; position: relative; display: flex; align-items: center; justify-content: center; }
.tb.run::after { content: ""; position: absolute; left: 4px; right: 5px; bottom: 0; height: 2px; background: #b9a067; }
.tb.hot { background: #4d5765; width: 48px; margin-right: 1px; }
.tb.hot::after { left: 0; right: 0; }
.tb.hot b { position: absolute; left: 25px; top: 18px; font-size: 10px; line-height: 14px; font-weight: 400; }
.tb.view { width: 48px; margin-right: 2px; }
.tray { margin-left: auto; display: flex; align-items: center; }
.wx { font-size: 13.500px; letter-spacing: -.1px; margin: 0 25px 0 11px; }
.spk { margin-left: 9px; } .wifi { margin-left: 10px; } .cloud { margin-left: 7px; } .bat { margin-left: 8px; }
.clock { width: 60px; margin-left: 8px; display: flex; flex-direction: column; align-items: center; font-size: 11.500px; line-height: 18px; }
.k1 { letter-spacing: -.2px; } .k2 { letter-spacing: -.28px; }
.note { margin: 0 20px 0 17px; }
.peek { width: 1px; height: 40px; background: #6d7681; margin-right: 3px; }
```
